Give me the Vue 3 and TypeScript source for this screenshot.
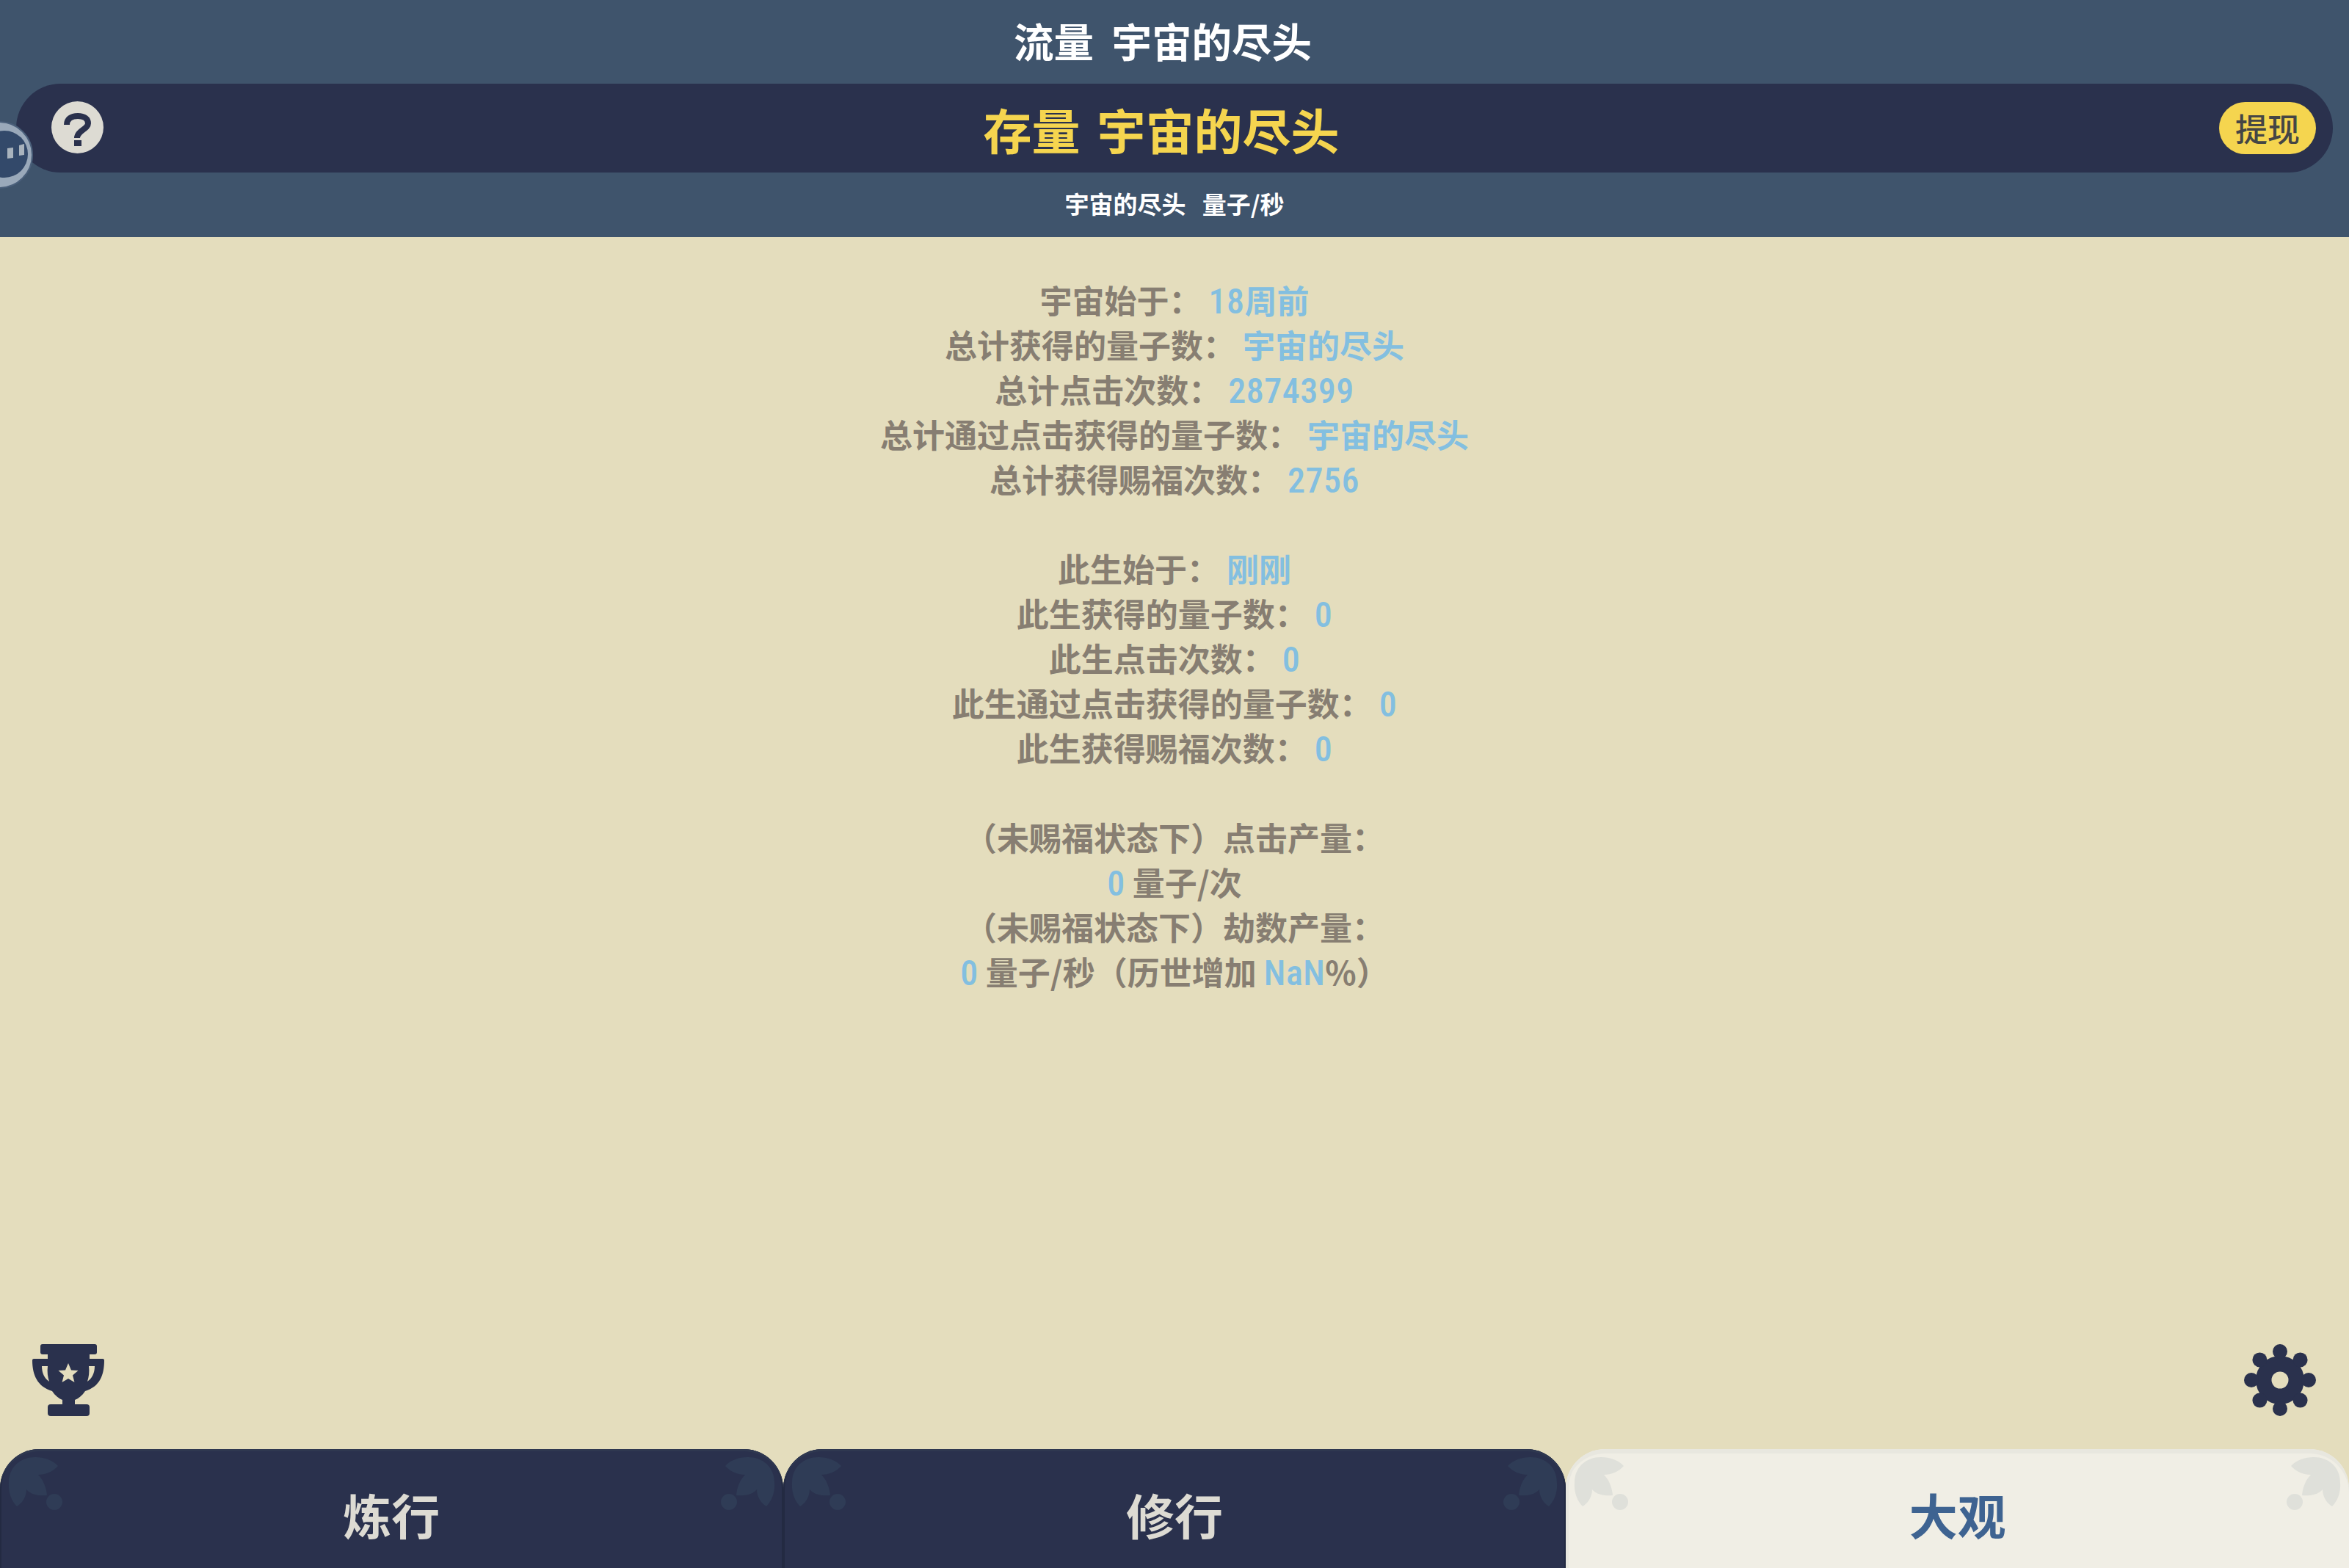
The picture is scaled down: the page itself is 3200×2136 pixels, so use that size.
<script setup lang="ts">
interface Part { t: string; k?: 'val' | 'num' }
const G = '宇宙的尽头'
const rows: Part[][] = [
  [{ t: '宇宙始于： ' }, { t: '18', k: 'num' }, { t: '周前', k: 'val' }],
  [{ t: '总计获得的量子数： ' }, { t: G, k: 'val' }],
  [{ t: '总计点击次数： ' }, { t: '2874399', k: 'num' }],
  [{ t: '总计通过点击获得的量子数： ' }, { t: G, k: 'val' }],
  [{ t: '总计获得赐福次数： ' }, { t: '2756', k: 'num' }],
  [],
  [{ t: '此生始于： ' }, { t: '刚刚', k: 'val' }],
  [{ t: '此生获得的量子数： ' }, { t: '0', k: 'num' }],
  [{ t: '此生点击次数： ' }, { t: '0', k: 'num' }],
  [{ t: '此生通过点击获得的量子数： ' }, { t: '0', k: 'num' }],
  [{ t: '此生获得赐福次数： ' }, { t: '0', k: 'num' }],
  [],
  [{ t: '（未赐福状态下）点击产量：' }],
  [{ t: '0', k: 'num' }, { t: ' 量子/次' }],
  [{ t: '（未赐福状态下）劫数产量：' }],
  [{ t: '0', k: 'num' }, { t: ' 量子/秒（历世增加 ' }, { t: 'NaN', k: 'num' }, { t: '%）' }],
]
const tabs = [
  { label: '炼行', active: false },
  { label: '修行', active: false },
  { label: '大观', active: true },
]
const leaf = 'M12 46 C12 24 28 11 48 11 C60 11 72 15 79 23 C72 31 62 35 52 35 C59 42 63 52 64 63 C52 64 42 62 36 55 C36 65 30 74 23 78 C15 70 11 58 12 46 Z'
const lobes = [0, 45, 90, 135, 180, 225, 270, 315]
</script>

<template>
  <div class="page">
    <header class="head">
      <div class="flow">流量&nbsp; 宇宙的尽头</div>
      <div class="pill">
        <svg class="help" viewBox="0 0 71 71">
          <circle cx="35.5" cy="35.5" r="35.5" fill="#dddbd3" />
          <path d="M21 32 C21 24 27 20 36 20 C45 20 50 24 50 30 C50 38 35 40 35 50" fill="none" stroke="#2a314d" stroke-width="8" />
          <rect x="31" y="53" width="10" height="8" fill="#2a314d" />
        </svg>
        <div class="stock">存量&nbsp; 宇宙的尽头</div>
        <div class="cash">提现</div>
      </div>
      <div class="rate">宇宙的尽头&nbsp;&nbsp; 量子/秒</div>
      <svg class="ball" viewBox="0 0 92 92">
        <circle cx="46" cy="46" r="45" fill="#9aa9ba" stroke="#4a5f7a" stroke-width="2" />
        <circle cx="53" cy="45" r="32" fill="#33496a" />
        <path d="M57 37 L65 36 L65 50 L57 51 Z M73 33 L80 31 L80 46 L73 47 Z" fill="#a9b3bd" />
      </svg>
    </header>

    <main class="stats">
      <div v-for="(row, i) in rows" :key="i" class="line">
        <template v-for="(p, j) in row" :key="j"><span :class="p.k">{{ p.t }}</span></template>
      </div>
    </main>

    <div class="tools">
      <svg class="tool" viewBox="0 0 98 98">
        <rect x="11" y="0" width="77" height="14" rx="3" fill="#2a314d" />
        <path fill="#2a314d" fill-rule="evenodd" d="M2 20 H21 V14 H78 V20 H96 Q98 20 98 22 C98 42 92 58 72 64 C68 70 63 74 58 76 V82 H41 V76 C36 74 31 70 27 64 C7 58 0 42 0 22 Q0 20 2 20 Z M13 30 H21 C20 38 21 45 23 51 C17 47 13 40 13 30 Z M85 30 H77 C78 38 77 45 75 51 C81 47 85 40 85 30 Z" />
        <rect x="21" y="82" width="57" height="16" rx="4" fill="#2a314d" />
        <polygon points="49,26 53,35.500 62.500,36 55,42.500 57.500,52 49,47 40.500,52 43,42.500 35.500,36 45,35.500" fill="#e4ddbd" />
      </svg>
      <svg class="tool" viewBox="0 0 98 98">
        <circle cx="49" cy="49" r="33" fill="#2a314d" />
        <circle v-for="a in lobes" :key="a" cx="49" cy="10" r="10" :transform="`rotate(${a} 49 49)`" fill="#2a314d" />
        <circle cx="49" cy="49" r="11.500" fill="#e4ddbd" />
      </svg>
    </div>

    <nav class="tabs">
      <div v-for="tab in tabs" :key="tab.label" class="tab" :class="{ on: tab.active }">
        <svg class="leaf" viewBox="0 0 100 100"><path :d="leaf" /><circle cx="74" cy="72" r="11" /></svg>
        <span>{{ tab.label }}</span>
        <svg class="leaf right" viewBox="0 0 100 100"><path :d="leaf" /><circle cx="74" cy="72" r="11" /></svg>
      </div>
    </nav>
  </div>
</template>

<style>
html, body { margin: 0; background: #e4ddbd; }
</style>

<style scoped>
.page {
  width: 3200px;
  height: 2136px;
  display: flex;
  flex-direction: column;
  overflow: hidden;
  background: #e4ddbd;
  font-family: "Noto Sans CJK SC", "Noto Sans", sans-serif;
}
.head {
  position: relative;
  height: 323px;
  flex: none;
  background: #3f546c;
  display: flex;
  flex-direction: column;
  align-items: center;
  color: #fff;
}
.flow {
  height: 114px;
  line-height: 110px;
  font-size: 54.5px;
  font-weight: 700;
  padding-right: 32px;
}
.pill {
  align-self: stretch;
  margin: 0 22px;
  height: 121px;
  flex: none;
  border-radius: 61px;
  background: #2a314d;
  position: relative;
  display: flex;
  align-items: center;
  justify-content: center;
  padding: 0 23px 0 48px;
}
.help {
  width: 71px;
  height: 71px;
  margin-bottom: 2px;
  flex: none;
}
.stock {
  flex: 1;
  text-align: center;
  color: #f5d54f;
  font-size: 66px;
  font-weight: 700;
  word-spacing: -3.5px;
  line-height: 116px;
}
.cash {
  width: 132px;
  height: 71px;
  line-height: 70px;
  text-align: center;
  border-radius: 36px;
  background: #f5d54f;
  color: #454545;
  font-size: 44px;
  font-weight: 500;
}
.rate {
  flex: 1;
  display: flex;
  align-items: center;
  padding-bottom: 4px;
  font-size: 33px;
  font-weight: 700;
  white-space: pre;
}
.ball {
  position: absolute;
  left: -47px;
  top: 165px;
  width: 92px;
  height: 92px;
}
.stats {
  flex: 1;
  padding-top: 55px;
  text-align: center;
  color: #877e72;
  font-size: 44px;
  font-weight: 700;
  line-height: 61px;
}
.line {
  height: 61px;
  white-space: pre;
}
.val {
  color: #83bfe0;
}
.num {
  color: #83bfe0;
  font-family: Roboto, "Noto Sans CJK SC", sans-serif;
  font-size: 48px;
  font-stretch: 85%;
  font-weight: 500;
  letter-spacing: 0.5px;
}
.tools {
  display: flex;
  justify-content: space-between;
  padding: 0 45px 45px 44px;
}
.tool {
  width: 98px;
  height: 98px;
}
.tabs {
  height: 162px;
  flex: none;
  display: grid;
  grid-template-columns: repeat(3, 1fr);
}
.tab {
  position: relative;
  display: flex;
  align-items: center;
  justify-content: center;
  border-radius: 54px 54px 0 0;
  background: #2a314d;
  box-shadow: inset 0 3px 0 #2f3850, inset 2px 0 0 #232a42, inset -2px 0 0 #232a42;
  color: #dddbd3;
  font-size: 66px;
  font-weight: 700;
  padding-top: 14px;
  box-sizing: border-box;
}
.tab.on {
  background: #f0eee5;
  box-shadow: inset 0 6px 0 #e8e7df, inset 6px 0 0 -2px #e8e7df;
  color: #3e6391;
}
.leaf {
  position: absolute;
  left: 0;
  top: 0;
  width: 100px;
  height: 100px;
  fill: #2f3c56;
}
.leaf.right {
  left: auto;
  right: 0;
  transform: scaleX(-1);
}
.tab.on .leaf {
  fill: #dfe0da;
}
</style>
